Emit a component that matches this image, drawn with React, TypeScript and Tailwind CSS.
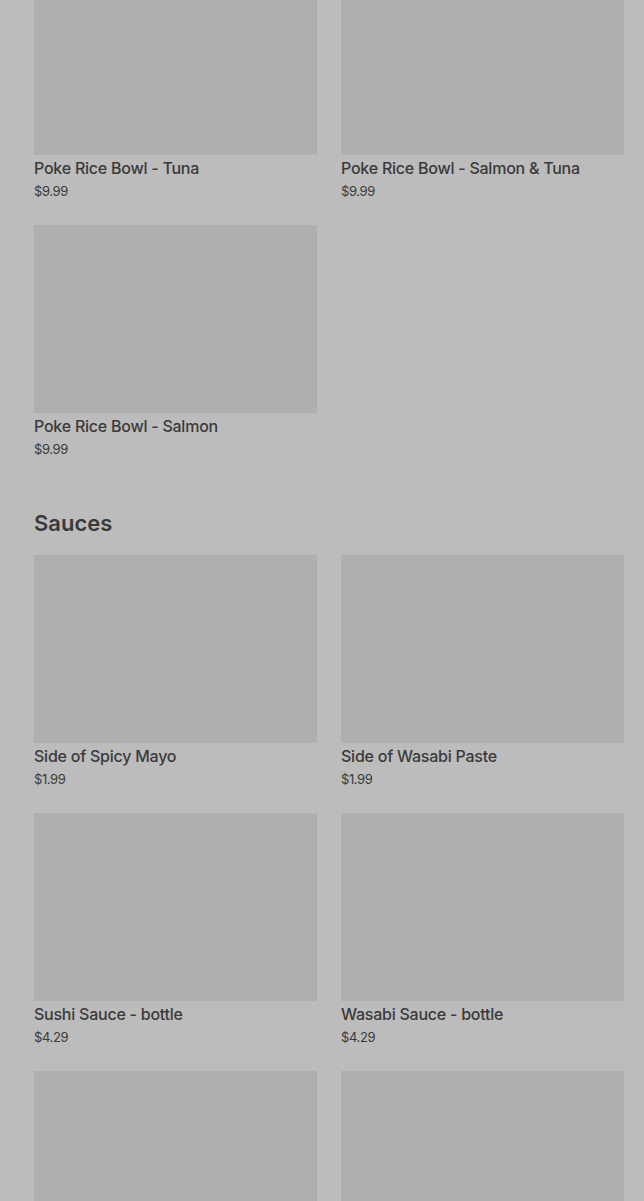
const menu = [
  {
    name: null,
    items: [
      { name: "Poke Rice Bowl - Tuna", price: "$9.99" },
      { name: "Poke Rice Bowl - Salmon & Tuna", price: "$9.99" },
      { name: "Poke Rice Bowl - Salmon", price: "$9.99" },
    ],
  },
  {
    name: "Sauces",
    items: [
      { name: "Side of Spicy Mayo", price: "$1.99" },
      { name: "Side of Wasabi Paste", price: "$1.99" },
      { name: "Sushi Sauce - bottle", price: "$4.29" },
      { name: "Wasabi Sauce - bottle", price: "$4.29" },
      { name: "Soy Sauce - bottle", price: "$3.99" },
      { name: "Eel Sauce - bottle", price: "$4.29" },
    ],
  },
];

function Item({ name, price }: { name: string; price: string }) {
  return (
    <div className="flex flex-col">
      <div className="h-[188px] w-full bg-[#afafaf]" />
      <p className="mt-[2px] text-[16px] leading-[22px] font-[450] tracking-[-0.015em] text-[#3a3a3a]">
        {name}
      </p>
      <p className="mt-[3px] text-[13px] leading-[18px] tracking-[-0.03em] text-[#3a3a3a]">{price}</p>
    </div>
  );
}

export default function App() {
  return (
    <div className="h-screen overflow-hidden bg-[#bcbcbc] font-['Inter',sans-serif]">
      <div className="-mt-[33px] flex flex-col gap-[50px] pl-[34px] pr-[20px] pb-10">
        {menu.map((section, i) => (
          <section key={i}>
            {section.name && (
              <h2 className="mb-[17px] text-[22px] leading-[30px] font-semibold text-[#3a3a3a]">
                {section.name}
              </h2>
            )}
            <div className="grid grid-cols-2 gap-x-6 gap-y-[25px]">
              {section.items.map((item) => (
                <Item key={item.name} {...item} />
              ))}
            </div>
          </section>
        ))}
      </div>
    </div>
  );
}
